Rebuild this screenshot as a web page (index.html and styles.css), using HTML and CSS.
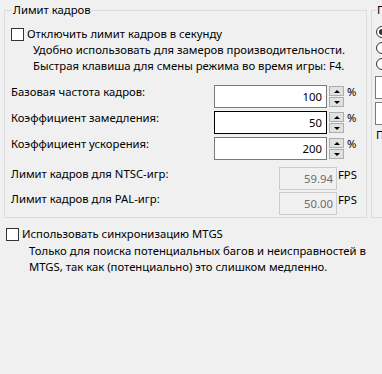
FILE: index.html
```html
<!DOCTYPE html>
<html lang="ru">
<head>
<meta charset="utf-8">
<title>Лимит кадров</title>
<link rel="stylesheet" href="styles.css">
</head>
<body>
<div class="page">
  <div class="top">
    <section class="group main">
      <div class="group-title">Лимит кадров</div>
      <div class="check"><span class="box"></span><span>Отключить лимит кадров в секунду</span></div>
      <div class="desc">Удобно использовать для замеров производительности.<br>Быстрая клавиша для смены режима во время игры: F4.</div>
      <div class="fields">
        <div class="row">
          <span class="lbl">Базовая частота кадров:</span>
          <span class="input">100</span>
          <span class="spin"><span class="btn"><span class="tri-up"></span></span><span class="btn"><span class="tri-down"></span></span></span>
          <span class="unit">%</span>
        </div>
        <div class="row r2">
          <span class="lbl">Коэффициент замедления:</span>
          <span class="input focus">50</span>
          <span class="spin"><span class="btn"><span class="tri-up"></span></span><span class="btn"><span class="tri-down"></span></span></span>
          <span class="unit">%</span>
        </div>
        <div class="row r3">
          <span class="lbl">Коэффициент ускорения:</span>
          <span class="input">200</span>
          <span class="spin"><span class="btn"><span class="tri-up"></span></span><span class="btn"><span class="tri-down"></span></span></span>
          <span class="unit">%</span>
        </div>
        <div class="row r4">
          <span class="lbl wide">Лимит кадров для NTSC-игр:</span>
          <span class="input ro">59.94</span>
          <span class="unit fps">FPS</span>
        </div>
        <div class="row r5">
          <span class="lbl wide">Лимит кадров для PAL-игр:</span>
          <span class="input ro">50.00</span>
          <span class="unit fps">FPS</span>
        </div>
      </div>
    </section>
    <section class="group side">
      <div class="group-title">П</div>
      <div class="radio-row first"><span class="radio on"></span></div>
      <div class="radio-row"><span class="radio"></span></div>
      <div class="radio-row"><span class="radio"></span></div>
      <div class="side-box first"></div>
      <div class="side-box"></div>
      <div class="side-label">П</div>
    </section>
  </div>
  <div class="check mtgs"><span class="box"></span><span>Использовать синхронизацию MTGS</span></div>
  <div class="desc mtgs-desc">Только для поиска потенциальных багов и неисправностей в<br>MTGS, так как (потенциально) это слишком медленно.</div>
</div>
</body>
</html>
```

FILE: styles.css
```css
* { box-sizing: border-box; }

html, body {
  margin: 0;
  background: #f0f0f0;
}

body {
  width: 382px;
  height: 374px;
  overflow: hidden;
  font-family: "Noto Sans", "Segoe UI", sans-serif;
  font-size: 11.3px;
  color: #000;
}

.page {
  padding-top: 10px;
}

.top {
  display: flex;
  align-items: flex-start;
}

.group {
  border: 1px solid #dcdcdc;
  height: 208px;
  display: flex;
  flex-direction: column;
  align-items: flex-start;
  flex-shrink: 0;
}

.main {
  margin-left: 4px;
  width: 363px;
  padding-left: 6px;
}

.side {
  margin-left: 4px;
  width: 40px;
  padding-left: 3px;
}

.group-title {
  margin: -9px 0 0 1px;
  padding: 0 1px;
  background: #f0f0f0;
  line-height: 16px;
  white-space: nowrap;
}

.check {
  display: flex;
  align-items: center;
  height: 16px;
  margin-top: 8px;
  line-height: 16px;
  white-space: nowrap;
}

.box {
  width: 13px;
  height: 13px;
  border: 1px solid #333;
  background: #fff;
  margin-right: 3px;
  flex-shrink: 0;
}

.desc {
  padding-left: 22px;
  line-height: 16px;
  white-space: nowrap;
}

.fields {
  margin-top: 11px;
  display: flex;
  flex-direction: column;
  width: 100%;
}

.row {
  display: flex;
  align-items: flex-start;
  height: 23px;
}

.r2, .r3 { margin-top: 3px; }
.r4 { margin-top: 7px; }
.r5 { margin-top: 2px; }

.lbl {
  width: 203px;
  line-height: 14px;
  white-space: nowrap;
  flex-shrink: 0;
}

.lbl.wide {
  width: 268px;
}

.input {
  width: 113px;
  height: 23px;
  border: 1px solid #7a7a7a;
  background: #fff;
  text-align: right;
  padding-right: 4px;
  line-height: 21px;
  flex-shrink: 0;
}

.input.focus {
  border-color: #000;
}

.input.ro {
  width: 58px;
  border-color: #cccccc;
  background: #f0f0f0;
  color: #6d6d6d;
  padding-right: 3px;
}

.spin {
  display: flex;
  flex-direction: column;
  gap: 1px;
  margin: 1px 0 0 2px;
}

.btn {
  width: 15px;
  height: 10px;
  background: #e1e1e1;
  border: 1px solid #adadad;
  display: flex;
  align-items: center;
  justify-content: center;
}

.tri-up {
  width: 0;
  height: 0;
  border-left: 3px solid transparent;
  border-right: 3px solid transparent;
  border-bottom: 3px solid #000;
}

.tri-down {
  width: 0;
  height: 0;
  border-left: 3px solid transparent;
  border-right: 3px solid transparent;
  border-top: 3px solid #000;
}

.unit {
  margin-left: 3px;
  line-height: 14px;
}

.unit.fps {
  margin-left: 1px;
  margin-top: 1px;
}

.radio-row {
  height: 16px;
  display: flex;
  align-items: center;
  padding-left: 1px;
}

.radio-row.first {
  margin-top: 6px;
}

.radio {
  width: 12px;
  height: 12px;
  border: 1px solid #333;
  border-radius: 50%;
  background: #fff;
  display: flex;
  align-items: center;
  justify-content: center;
}

.radio.on::after {
  content: "";
  width: 6px;
  height: 6px;
  border-radius: 50%;
  background: #333;
}

.side-box {
  width: 40px;
  height: 23px;
  border: 1px solid #7a7a7a;
  background: #fff;
  margin-top: 3px;
}

.side-box.first {
  margin-top: 4px;
}

.side-label {
  margin: 2px 0 0 1px;
  line-height: 16px;
}

.mtgs {
  padding-left: 6px;
  margin-top: 8px;
}

.mtgs-desc {
  padding-left: 29px;
  margin-top: 1px;
}
```
